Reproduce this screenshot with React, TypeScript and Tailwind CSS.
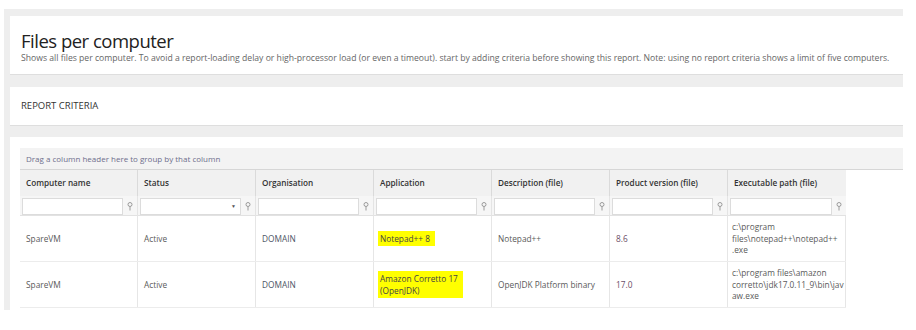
import React from 'react';

const font = { fontFamily: '"Open Sans", "Noto Sans", Arial, sans-serif' };

interface Row {
  computer: string;
  status: string;
  org: string;
  app: string[];
  desc: string;
  version: string;
  path: string[];
}

const columns = [
  'Computer name',
  'Status',
  'Organisation',
  'Application',
  'Description (file)',
  'Product version (file)',
  'Executable path (file)',
];

const rows: Row[] = [
  {
    computer: 'SpareVM',
    status: 'Active',
    org: 'DOMAIN',
    app: ['Notepad++ 8'],
    desc: 'Notepad++',
    version: '8.6',
    path: ['c:\\program', 'files\\notepad++\\notepad++', '.exe'],
  },
  {
    computer: 'SpareVM',
    status: 'Active',
    org: 'DOMAIN',
    app: ['Amazon Corretto 17', '(OpenJDK)'],
    desc: 'OpenJDK Platform binary',
    version: '17.0',
    path: ['c:\\program files\\amazon', 'corretto\\jdk17.0.11_9\\bin\\jav', 'aw.exe'],
  },
];

const FilterPin: React.FC = () => (
  <svg width="6" height="9" viewBox="0 0 6 9" className="shrink-0">
    <circle cx="3" cy="2.5" r="2" fill="none" stroke="#9a9a9a" strokeWidth="1" />
    <line x1="3" y1="4.5" x2="3" y2="8.5" stroke="#9a9a9a" strokeWidth="1" />
  </svg>
);

const FilterCell: React.FC<{ dropdown?: boolean }> = ({ dropdown }) => (
  <div className="w-[118px] h-[20px] flex items-center gap-[4px] pl-[2px] pr-[4px] border-r border-[#e4e4e4] last:border-r-0">
    <div className="flex-1 h-[17px] bg-white border border-[#dcdcdc] flex items-center justify-end pr-[4px]">
      {dropdown && <span className="text-[5px] text-[#555] leading-none">▼</span>}
    </div>
    <FilterPin />
  </div>
);

export default function App() {
  return (
    <div className="bg-white w-[916px] h-[330px] pt-[9px] pl-[4px]" style={font}>
      <div className="w-[899px] h-[301px] bg-[#eeeeee] pt-[7px] pl-[6px] overflow-hidden flex flex-col gap-[12px]">
        <div className="h-[59px] shrink-0 bg-white border-b border-[#dedede] pl-[11px] pt-[12px]">
          <h1 className="text-[18.5px] leading-[25px] text-[#222] font-normal tracking-[-0.5px]">Files per computer</h1>
          <p className="text-[8.65px] leading-[11px] text-[#666] whitespace-nowrap">
            Shows all files per computer. To avoid a report-loading delay or high-processor load (or even a timeout). start by adding criteria before showing this report. Note: using no report criteria shows a limit of five computers.
          </p>
        </div>

        <div className="h-[39px] shrink-0 bg-white border-b border-[#dedede] pl-[11px] flex items-center">
          <span className="text-[9.5px] text-[#333]">REPORT CRITERIA</span>
        </div>

        <div className="flex-1 bg-white pt-[11px] pl-[10px] -mt-px">
          <div className="h-[22px] bg-[#f3f3f3] border-b border-[#d6d6d6] flex items-center pl-[6px]">
            <span className="text-[8px] text-[#6e6e8c]">Drag a column header here to group by that column</span>
          </div>

          <div className="w-[826px]">
            <div className="flex h-[26px] bg-[#f1f1f1]">
              {columns.map((c) => (
                <div key={c} className="w-[118px] flex items-center pl-[6px] border-r border-[#dadada] last:border-r-0">
                  <span className="text-[8.2px] font-semibold text-[#333]">{c}</span>
                </div>
              ))}
            </div>

            <div className="flex h-[20px] bg-[#f6f6f6] border-b border-[#e2e2e2]">
              {columns.map((c, i) => (
                <FilterCell key={c} dropdown={i === 1} />
              ))}
            </div>

            {rows.map((r, idx) => (
              <div key={idx} className="flex h-[46px] border-b border-[#ececec] text-[8.3px] text-[#5a5a5a] leading-[11.5px]">
                <div className="w-[118px] flex items-center pl-[6px] border-r border-[#e6e6e6]">{r.computer}</div>
                <div className="w-[118px] flex items-center pl-[6px] border-r border-[#e6e6e6]">{r.status}</div>
                <div className="w-[118px] flex items-center pl-[6px] border-r border-[#e6e6e6] text-[#4d5566]">{r.org}</div>
                <div className="w-[118px] flex items-center pl-[4px] border-r border-[#e6e6e6]">
                  <div className="bg-[#ffff00] px-[2px] py-[2px] pr-[5px] text-[#444]">
                    {r.app.map((l) => (
                      <div key={l}>{l}</div>
                    ))}
                  </div>
                </div>
                <div className="w-[118px] flex items-center pl-[6px] border-r border-[#e6e6e6]">{r.desc}</div>
                <div className="w-[118px] flex items-center pl-[6px] border-r border-[#e6e6e6] text-[#6a4d66]">{r.version}</div>
                <div className="w-[118px] flex items-center pl-[4px] border-r border-[#e6e6e6]">
                  <div>
                    {r.path.map((l) => (
                      <div key={l} className="whitespace-nowrap">{l}</div>
                    ))}
                  </div>
                </div>
              </div>
            ))}
          </div>
        </div>
      </div>
    </div>
  );
}
